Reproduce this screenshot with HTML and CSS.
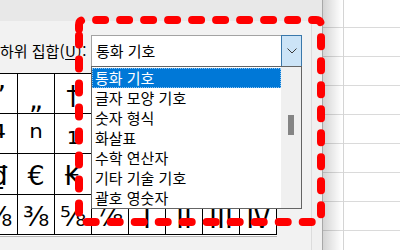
FILE: index.html
```html
<!DOCTYPE html>
<html lang="ko">
<head>
<meta charset="utf-8">
<title>기호</title>
<link rel="stylesheet" href="styles.css">
</head>
<body>
<div class="page">
  <div class="dialog">
    <div class="titlestrip"></div>
    <div class="panel">
      <div class="subset-row">
        <span class="label">하위 집합<span class="key">(<u>U</u>):</span></span>
        <div class="combo">
          <span class="combo-text">통화 기호</span>
          <span class="drop-btn">
            <svg width="10" height="6" viewBox="0 0 10 6"><polyline points="0.5,0.5 5,5 9.5,0.5" fill="none" stroke="#3a3a3a" stroke-width="1"/></svg>
          </span>
          <div class="listbox">
            <div class="items">
              <div class="item selected">통화 기호</div>
              <div class="item">글자 모양 기호</div>
              <div class="item">숫자 형식</div>
              <div class="item">화살표</div>
              <div class="item">수학 연산자</div>
              <div class="item">기타 기술 기호</div>
              <div class="item">괄호 영숫자</div>
            </div>
            <div class="vscroll"><div class="thumb"></div></div>
          </div>
        </div>
      </div>
      <div class="grid-wrap">
        <div class="grid">
          <span class="cell">”</span><span class="cell low">„</span><span class="cell">†</span><span class="cell">‡</span><span class="cell">•</span><span class="cell">‥</span><span class="cell">…</span><span class="cell">‰</span>
          <span class="cell sup">⁴</span><span class="cell sup">ⁿ</span><span class="cell sub">₁</span><span class="cell sub">₂</span><span class="cell sub">₃</span><span class="cell sub">₄</span><span class="cell">₩</span><span class="cell">₪</span>
          <span class="cell">₫</span><span class="cell">€</span><span class="cell">₭</span><span class="cell">₮</span><span class="cell">₱</span><span class="cell">₹</span><span class="cell">℃</span><span class="cell">℅</span>
          <span class="cell">⅛</span><span class="cell">⅜</span><span class="cell">⅝</span><span class="cell">⅞</span><span class="cell roman">Ⅰ</span><span class="cell roman">Ⅱ</span><span class="cell roman">Ⅲ</span><span class="cell roman">Ⅳ</span>
        </div>
      </div>
    </div>
  </div>
  <div class="sheet"></div>
  <svg class="highlight" width="400" height="250" viewBox="0 0 400 250">
    <path d="M79,34 V25 Q79,20 84,20 H316 Q321,20 321,25 V217 Q321,222 316,222 H84 Q79,222 79,217 Z" fill="none" stroke="#ff0000" stroke-width="8" stroke-linecap="round" stroke-linejoin="round" stroke-dasharray="9 15" stroke-dashoffset="-5"/>
  </svg>
</div>
</body>
</html>
```

FILE: styles.css
```css
* { box-sizing: border-box; }
html, body { margin: 0; padding: 0; }
body {
  width: 400px;
  height: 250px;
  overflow: hidden;
  background: #ffffff;
  color: #000;
  font-family: "Noto Sans CJK KR", "Noto Sans", sans-serif;
  font-size: 15px;
}
.page {
  position: relative;
  display: flex;
  width: 400px;
  height: 250px;
}
.dialog {
  flex: 0 0 323px;
  display: flex;
  flex-direction: column;
  background: #f0f0f0;
  border-right: 1px solid #a8a8a8;
}
.titlestrip {
  flex: 0 0 21px;
  background: #e8e8e8;
}
.panel {
  flex: 1;
  width: 312px;
  padding-top: 14px;
  background: #f2f2f2;
  border-right: 1px solid #dcdcdc;
}
.subset-row {
  display: flex;
  height: 32px;
}
.label {
  flex: 0 0 91px;
  line-height: 32px;
  white-space: nowrap;
}
.label .key { letter-spacing: 0.6px; }
.label u { text-underline-offset: 2px; }
.combo {
  position: relative;
  width: 211px;
  height: 32px;
  background: #fff;
  border: 1px solid #a3a3a3;
}
.combo-text {
  display: block;
  line-height: 30px;
  padding-left: 4px;
}
.drop-btn {
  position: absolute;
  top: -1px;
  right: -1px;
  width: 21px;
  height: 32px;
  display: flex;
  align-items: center;
  justify-content: center;
  background: #cce4f7;
  border: 1px solid #3a78ab;
}
.listbox {
  position: absolute;
  left: -1px;
  top: 30px;
  width: 211px;
  height: 143px;
  display: flex;
  background: #fff;
  border: 1px solid #646464;
  z-index: 2;
}
.items {
  flex: 1;
  padding-top: 1px;
}
.item {
  height: 20px;
  line-height: 20px;
  padding-left: 3px;
  white-space: nowrap;
}
.item.selected {
  background: #0078d7;
  color: #fff;
  outline: 1px dotted #8cc3ef;
  outline-offset: -1px;
}
.vscroll {
  flex: 0 0 20px;
  background: #f0f0f0;
  padding-top: 48px;
  padding-left: 7px;
}
.thumb {
  width: 6px;
  height: 20px;
  background: #858585;
}
.grid-wrap {
  margin-top: 6px;
  margin-left: -20px;
  width: 297px;
  background: #fff;
  padding-bottom: 1px;
  border-bottom: 1px solid #b4b4b4;
}
.grid {
  display: grid;
  grid-template-columns: repeat(8, 36px);
  grid-template-rows: 39px 39px 40px 39px;
  gap: 1px;
  background: #000;
  border: 1px solid #000;
}
.cell {
  background: #fff;
  font-family: "DejaVu Sans", sans-serif;
  font-size: 27px;
  line-height: 39px;
  text-align: center;
  padding-top: 2px;
  overflow: hidden;
  white-space: nowrap;
}
.cell.low {
  display: flex;
  align-items: flex-end;
  justify-content: center;
  line-height: 27px;
  padding-top: 0;
}
.cell.sup { font-size: 34px; padding-top: 4px; }
.cell.sub { font-size: 30px; padding-top: 0; }
.cell.roman { font-family: "Noto Sans CJK KR", "DejaVu Sans", sans-serif; }
.sheet {
  flex: 1;
  background:
    linear-gradient(to right, rgba(0,0,0,0.17), rgba(0,0,0,0) 19px),
    linear-gradient(to right, transparent 20px, #d4d4d4 20px, #d4d4d4 21px, transparent 21px),
    repeating-linear-gradient(to bottom, #fff 0, #fff 27px, #dadada 27px, #dadada 28px, #fff 28px, #fff 29px);
}
.highlight {
  position: absolute;
  left: 0;
  top: 0;
  pointer-events: none;
}
```
